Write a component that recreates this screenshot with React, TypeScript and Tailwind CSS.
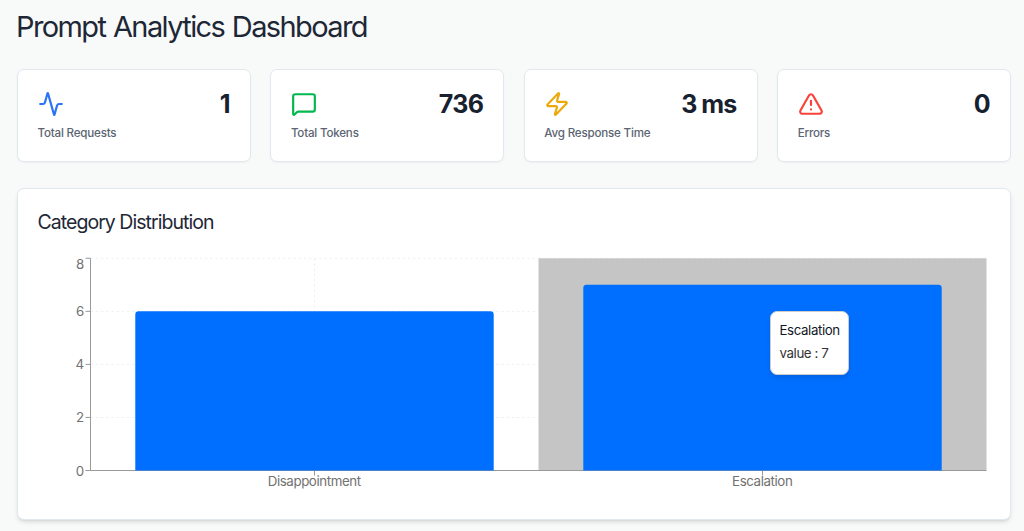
import { Activity, MessageSquare, TriangleAlert, Zap } from "lucide-react";
import type { LucideIcon } from "lucide-react";

type Stat = { label: string; value: string; icon: LucideIcon; color: string };

const stats: Stat[] = [
  { label: "Total Requests", value: "1", icon: Activity, color: "text-[#2b74f5]" },
  { label: "Total Tokens", value: "736", icon: MessageSquare, color: "text-[#00b84f]" },
  { label: "Avg Response Time", value: "3 ms", icon: Zap, color: "text-[#eba90c]" },
  { label: "Errors", value: "0", icon: TriangleAlert, color: "text-[#f9423a]" },
];

function StatCard({ label, value, icon: Icon, color }: Stat) {
  return (
    <div className="h-[93px] rounded-[7px] border border-[#e2e8f0] bg-white px-5 pt-[19px] shadow-[0_1px_2px_rgba(0,0,0,0.04)]">
      <div className="flex h-[30px] items-center justify-between">
        <Icon className={`-ml-[0.5px] size-[26px] ${color}`} strokeWidth={2} />
        <span className="text-[25px] font-bold leading-[30px] tracking-[-0.7px] [word-spacing:-0.8px]">{value}</span>
      </div>
      <p className="-ml-[0.5px] mt-[6px] text-[11.6px] font-medium leading-4 tracking-[-0.2px] text-[#5b6472]">{label}</p>
    </div>
  );
}

const data = [
  { name: "Disappointment", value: 6 },
  { name: "Escalation", value: 7 },
];

const LEFT = 52.5;
const RIGHT = 948.5;
const TOP = 10.3;
const BOTTOM = 222.5;
const MAX = 8;
const BAND = (RIGHT - LEFT) / data.length;
const BAR = BAND * 0.8;

const yOf = (v: number) => BOTTOM - ((BOTTOM - TOP) * v) / MAX;
const centerOf = (i: number) => LEFT + BAND * (i + 0.5);

function barPath(i: number, value: number) {
  const x = centerOf(i) - BAR / 2;
  const y = yOf(value);
  const r = 3.3;
  return `M${x},${BOTTOM}V${y + r}a${r},${r} 0 0 1 ${r},${-r}H${x + BAR - r}a${r},${r} 0 0 1 ${r},${r}V${BOTTOM}Z`;
}

function BarChart() {
  return (
    <svg width="952" height="251" viewBox="0 0 952 251" className="block">
      <g stroke="#f0f0f0" strokeDasharray="2.6 2.6">
        {[2, 4, 6, 8].map((t) => (
          <line key={t} x1={LEFT} x2={RIGHT} y1={yOf(t)} y2={yOf(t)} />
        ))}
        {data.map((d, i) => (
          <line key={d.name} x1={centerOf(i)} x2={centerOf(i)} y1={TOP} y2={BOTTOM} />
        ))}
      </g>
      <rect x={LEFT + BAND} y={TOP} width={BAND} height={BOTTOM - TOP} fill="#c5c5c5" />
      <g stroke="#999999">
        <line x1={LEFT} x2={RIGHT} y1={BOTTOM} y2={BOTTOM} />
        <line x1={LEFT} x2={LEFT} y1={TOP} y2={BOTTOM} />
        {[0, 2, 4, 6, 8].map((t) => (
          <line key={t} x1={LEFT - 5} x2={LEFT} y1={yOf(t)} y2={yOf(t)} />
        ))}
        {data.map((d, i) => (
          <line key={d.name} x1={centerOf(i)} x2={centerOf(i)} y1={BOTTOM} y2={BOTTOM + 5} />
        ))}
      </g>
      {data.map((d, i) => (
        <path key={d.name} d={barPath(i, d.value)} fill="#006fff" />
      ))}
      <g className="fill-[#717171] text-[13.3px]">
        {[0, 2, 4, 6, 8].map((t) => (
          <text key={t} x={LEFT - 6.3} y={yOf(t) + (t === MAX ? 10.5 : 5)} textAnchor="end">
            {t}
          </text>
        ))}
        {data.map((d, i) => (
          <text key={d.name} x={centerOf(i) - 0.3} y={BOTTOM + 15.7} textAnchor="middle" className="tracking-[-0.4px]">
            {d.name}
          </text>
        ))}
      </g>
    </svg>
  );
}

export default function App() {
  return (
    <main className="h-[531px] overflow-hidden bg-[#f8faf9] pl-[17px] pr-[13px] pt-[7px] font-['Inter','Liberation_Sans',sans-serif] text-[#18212f]">
      <h1 className="-ml-px h-10 whitespace-nowrap text-[29px] font-normal leading-[39px] tracking-[-1.6px] text-[#1e2736] [word-spacing:1px]">Prompt Analytics Dashboard</h1>
      <div className="mt-[22px] grid grid-cols-4 gap-[19.6px]">
        {stats.map((s) => (
          <StatCard key={s.label} {...s} />
        ))}
      </div>
      <section className="mt-[26px] h-[332px] rounded-[7px] border border-[#e2e8f0] bg-white px-5 pt-5 shadow-[0_3px_5px_-1px_rgba(0,0,0,0.12),0_2px_3px_-2px_rgba(0,0,0,0.1)]">
        <h2 className="-ml-[0.5px] h-[27px] text-[19.5px] font-normal leading-[27px] tracking-[-0.96px] text-[#1e2736]">Category Distribution</h2>
        <div className="relative mt-3">
          <BarChart />
          <div className="absolute left-[732px] top-[63px] h-[64px] w-[79px] whitespace-nowrap rounded-[7px] border border-[#cccccc] bg-white pl-[8.5px] pt-[8px] text-[13.3px] leading-5 tracking-[-0.4px] shadow-[0_3px_5px_rgba(0,0,0,0.1)]">
            <p className="text-[#111827]">Escalation</p>
            <p className="mt-[3px] text-[#333333]">value : 7</p>
          </div>
        </div>
      </section>
    </main>
  );
}
